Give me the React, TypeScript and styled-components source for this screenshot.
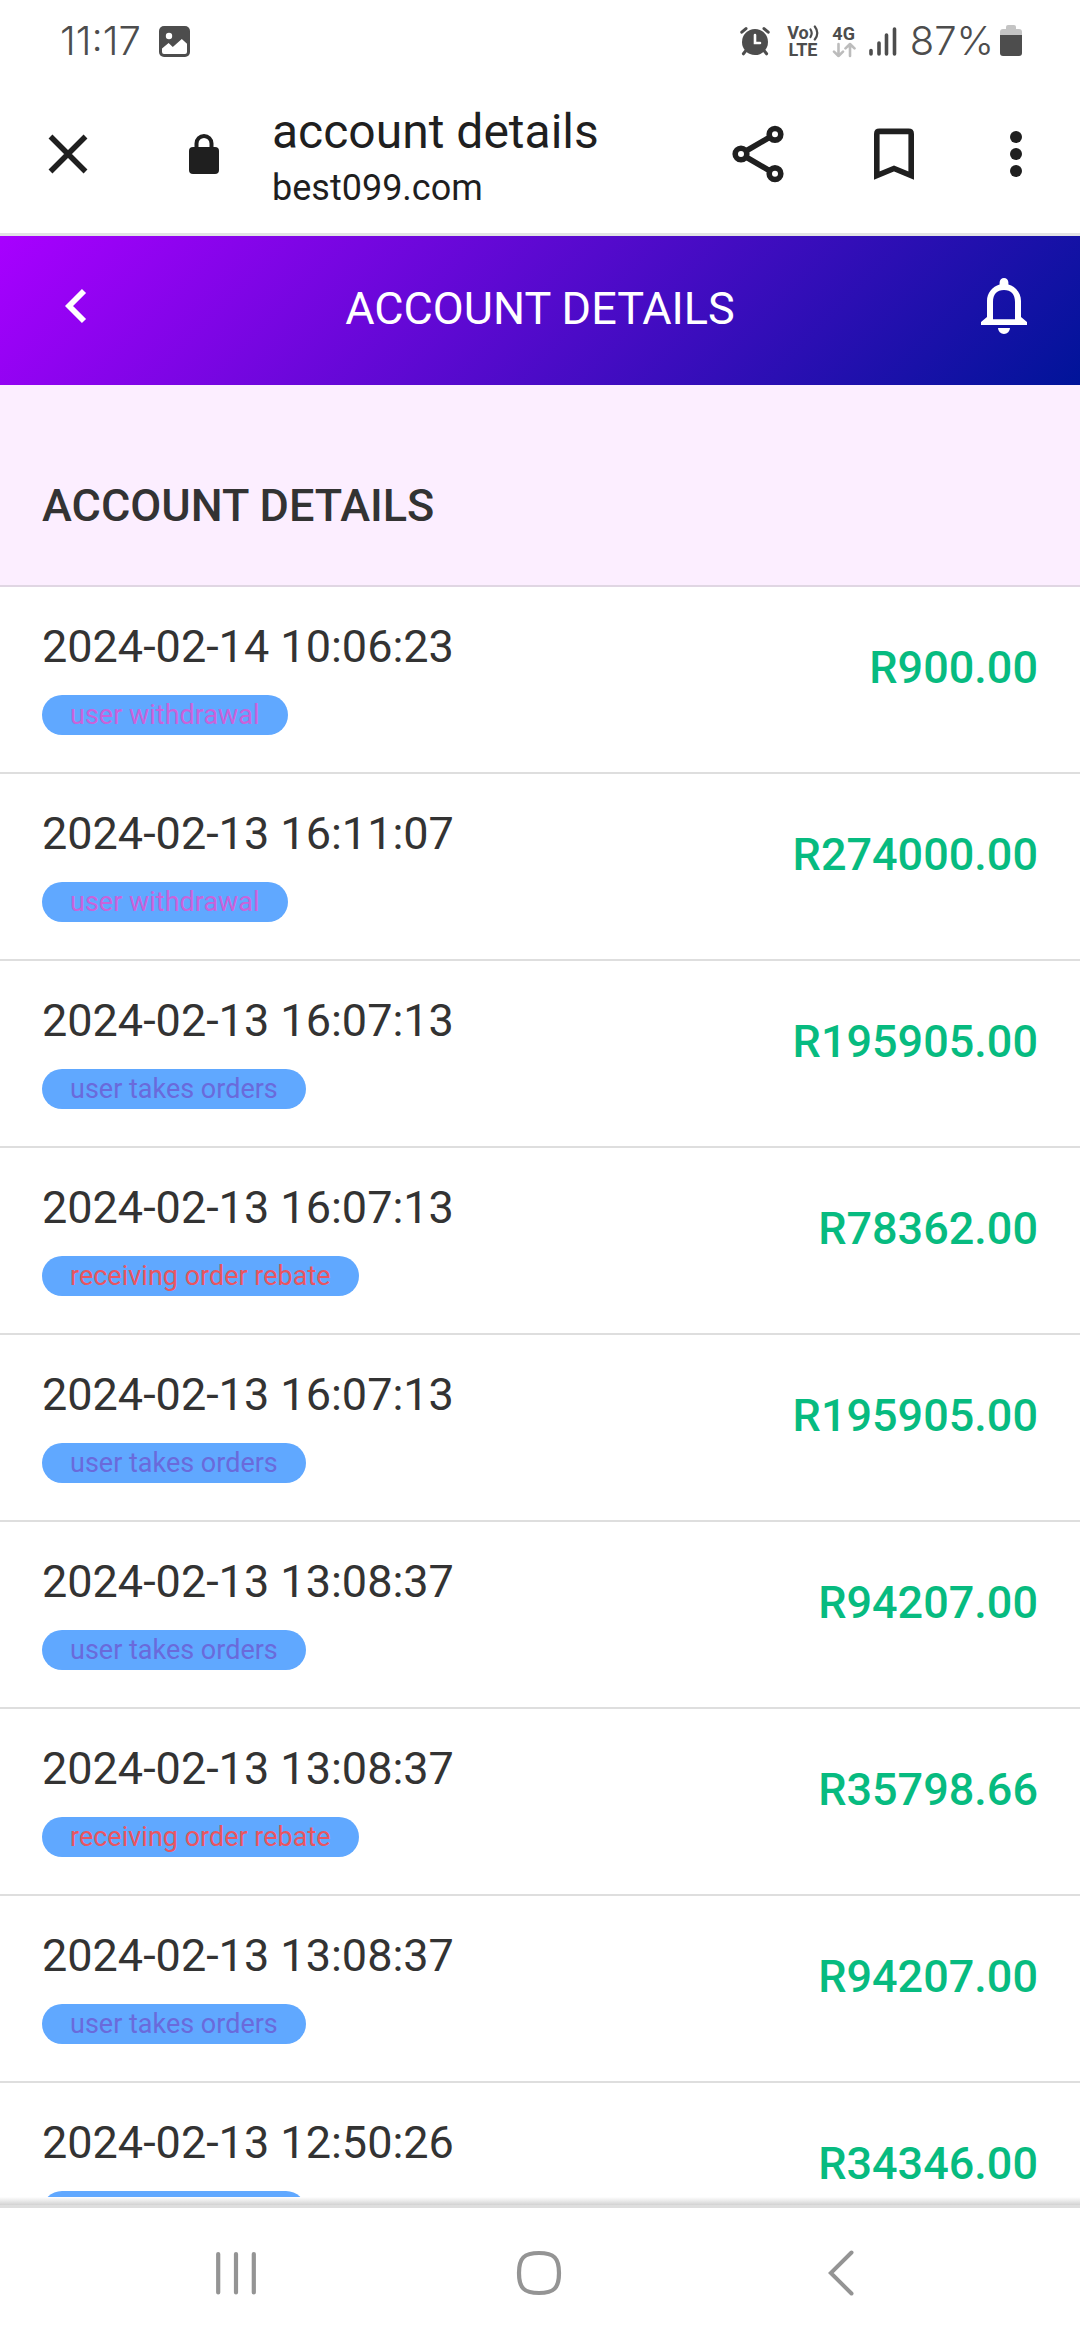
import React from "react";
import styled, { createGlobalStyle } from "styled-components";

const Global = createGlobalStyle`
  *, *::before, *::after { box-sizing: border-box; }
  html, body, #root { height: 100%; }
  body { margin: 0; background: #ffffff; font-family: Roboto, "Liberation Sans", sans-serif; color: #333333; }
  h1, h2, p, ul { margin: 0; padding: 0; font-weight: 400; }
  button { border: 0; padding: 0; background: none; color: inherit; font: inherit; cursor: pointer; }
  svg { display: block; flex: none; }
`;

const Screen = styled.div`
  display: flex;
  flex-direction: column;
  height: 100vh;
  overflow: hidden;
`;

const StatusBar = styled.div`
  flex: none;
  display: flex;
  align-items: center;
  justify-content: space-between;
  height: 82px;
  padding: 0 58px 0 60px;
  color: #4d4d4d;
  font-family: Inter, Roboto, sans-serif;
  font-weight: 300;
  font-size: 40px;
  line-height: 48px;
`;

const StatusGroup = styled.div<{ $gap: number }>`
  display: flex;
  align-items: center;
  gap: ${(p) => p.$gap}px;
`;

const Indicator = styled.span<{ $start?: boolean }>`
  display: flex;
  flex-direction: column;
  align-items: center;
  margin-left: ${(p) => (p.$start ? 4 : 0)}px;
  font-family: Roboto, sans-serif;
  font-size: 18px;
  font-weight: 700;
  line-height: 17px;
`;

const VoLine = styled.span`
  display: flex;
  align-items: center;
`;

const Toolbar = styled.header`
  flex: none;
  display: flex;
  align-items: center;
  height: 154px;
  padding: 0 50px 8px 40px;
  border-bottom: 3px solid #e2e2e4;
  color: #1f1f1f;
`;

const ToolButton = styled.button<{ $narrow?: boolean }>`
  flex: none;
  display: flex;
  align-items: center;
  justify-content: center;
  width: ${(p) => (p.$narrow ? 28 : 56)}px;
  height: 72px;
`;

const PageInfo = styled.div`
  flex: 1;
  min-width: 0;
  margin-left: 40px;
  padding-top: 6px;
`;

const PageTitle = styled.p`
  font-size: 48px;
  line-height: 62px;
  overflow: hidden;
  white-space: nowrap;
  text-overflow: ellipsis;
`;

const PageHost = styled.p`
  font-size: 36px;
  line-height: 50px;
`;

const ToolGroup = styled.div`
  display: flex;
  gap: 80px;
`;

const AppHeader = styled.header`
  flex: none;
  display: grid;
  grid-template-columns: 1fr auto 1fr;
  align-items: center;
  height: 149px;
  padding: 0 48px 4px;
  background: linear-gradient(135deg, #a800ff, #001499);
  color: #ffffff;
`;

const HeaderTitle = styled.h1`
  font-size: 45px;
  line-height: 54px;
`;

const HeaderButton = styled.button<{ $end?: boolean }>`
  display: flex;
  align-items: center;
  justify-content: center;
  width: 56px;
  height: 72px;
  padding-bottom: 6px;
  justify-self: ${(p) => (p.$end ? "end" : "start")};
`;

const SectionHead = styled.div`
  flex: none;
  height: 202px;
  padding: 94px 42px 0;
  border-bottom: 2px solid #e0d6e3;
  background: #fceeff;
`;

const SectionTitle = styled.h2`
  font-size: 45px;
  font-weight: 500;
  line-height: 54px;
`;

const List = styled.ul`
  flex: 1;
  min-height: 0;
  overflow: hidden;
  list-style: none;
`;

const Row = styled.li`
  display: flex;
  align-items: flex-start;
  justify-content: space-between;
  height: 187px;
  padding: 33px 42px 0;
  border-bottom: 2px solid #dedede;
`;

const Stamp = styled.time`
  display: block;
  font-size: 45px;
  line-height: 54px;
`;

const Tag = styled.span<{ $color: string }>`
  display: inline-block;
  margin-top: 21px;
  padding: 0 28px;
  border-radius: 20px;
  background: #60a8ff;
  color: ${(p) => p.$color};
  font-size: 27px;
  line-height: 40px;
  vertical-align: top;
`;

const Amount = styled.span`
  margin-top: 21px;
  color: #07bb80;
  font-size: 45px;
  font-weight: 500;
  line-height: 54px;
`;

const Shade = styled.div`
  flex: none;
  height: 11px;
  border-bottom: 3px solid #dedede;
  background: linear-gradient(#ffffff, #d2d2d2);
`;

const NavBar = styled.nav`
  flex: none;
  display: flex;
  align-items: center;
  justify-content: space-between;
  height: 132px;
  padding: 0 207px 2px 204px;
  color: #949494;
`;

const NavButton = styled.button`
  display: flex;
  align-items: center;
  justify-content: center;
  width: 64px;
  height: 64px;
`;

const PINK = "#cb62da";
const VIOLET = "#6a6adb";
const RED = "#ea5560";

const entries = [
  { time: "2024-02-14 10:06:23", kind: "user withdrawal", color: PINK, amount: "R900.00" },
  { time: "2024-02-13 16:11:07", kind: "user withdrawal", color: PINK, amount: "R274000.00" },
  { time: "2024-02-13 16:07:13", kind: "user takes orders", color: VIOLET, amount: "R195905.00" },
  { time: "2024-02-13 16:07:13", kind: "receiving order rebate", color: RED, amount: "R78362.00" },
  { time: "2024-02-13 16:07:13", kind: "user takes orders", color: VIOLET, amount: "R195905.00" },
  { time: "2024-02-13 13:08:37", kind: "user takes orders", color: VIOLET, amount: "R94207.00" },
  { time: "2024-02-13 13:08:37", kind: "receiving order rebate", color: RED, amount: "R35798.66" },
  { time: "2024-02-13 13:08:37", kind: "user takes orders", color: VIOLET, amount: "R94207.00" },
  { time: "2024-02-13 12:50:26", kind: "user takes orders", color: VIOLET, amount: "R34346.00" },
];

const PictureIcon = () => (
  <svg width="31" height="31" viewBox="0 0 31 31">
    <rect width="31" height="31" rx="5" fill="currentColor" />
    <circle cx="10" cy="10" r="3.2" fill="#fff" />
    <path d="M3 22.5 9.6 17l4.2 4L22.8 13l5.2 4.8V26a2 2 0 0 1-2 2H5a2 2 0 0 1-2-2z" fill="#fff" />
  </svg>
);

const AlarmIcon = () => (
  <svg width="30" height="30" viewBox="0 0 30 30" fill="none" stroke="currentColor" strokeLinecap="round">
    <circle cx="15" cy="16" r="13" fill="currentColor" stroke="none" />
    <path d="M1.8 6.2 6 2.6M28.2 6.2 24 2.6" strokeWidth="3" />
    <path d="m5.6 25-2.2 2.8M24.4 25l2.2 2.8" strokeWidth="3" />
    <path d="M15 9v8h5" stroke="#fff" strokeWidth="2.6" />
  </svg>
);

const WavesIcon = () => (
  <svg width="10" height="16" viewBox="0 0 10 16" fill="none" stroke="currentColor" strokeWidth="2.2" strokeLinecap="round">
    <path d="M1.5 4.5q2.4 3.8 0 7.5M5.8 1.5q5 6.5 0 13" />
  </svg>
);

const DataIcon = () => (
  <svg width="24" height="16" viewBox="0 0 24 16" fill="none" stroke="#bcbcbc" strokeWidth="2.6" strokeLinecap="round" strokeLinejoin="round">
    <path d="M6.5 2v12M2 9.6 6.5 14 11 9.6M18 14V2M13.5 6.4 18 2l4.5 4.4" />
  </svg>
);

const SignalIcon = () => (
  <svg width="28" height="30" viewBox="0 0 28 30" fill="none" stroke="currentColor" strokeWidth="3.6" strokeLinecap="round">
    <path d="M2 24.5V28M10 17v11M17.5 9v19M25.5 3v25" />
  </svg>
);

const BatteryIcon = () => (
  <svg width="22" height="32" viewBox="0 0 22 32">
    <path d="M6 2q0-2 2-2h6q2 0 2 2v2h3q3 0 3 3v3H0V7q0-3 3-3h3z" fill="#c4c4c4" />
    <path d="M0 10h22v18q0 3-3 3H3q-3 0-3-3z" fill="currentColor" />
  </svg>
);

const CloseIcon = () => (
  <svg width="40" height="40" viewBox="0 0 40 40" fill="none" stroke="currentColor" strokeWidth="5.5">
    <path d="m2.5 2.5 35 35M37.5 2.5l-35 35" />
  </svg>
);

const LockIcon = () => (
  <svg width="30" height="40" viewBox="0 0 30 40">
    <rect y="13" width="30" height="27" rx="4" fill="currentColor" />
    <path d="M7.5 15V9.500a7.5 7.5 0 0 1 15 0V15" fill="none" stroke="currentColor" strokeWidth="4" />
  </svg>
);

const ShareIcon = () => (
  <svg width="52" height="58" viewBox="0 0 52 58" fill="none" stroke="currentColor" strokeWidth="5.6">
    <path d="m14 26 24-14M14 32l24 14" />
    <circle cx="9" cy="29" r="5.8" fill="#fff" />
    <circle cx="43" cy="9.3" r="5.8" fill="#fff" />
    <circle cx="43" cy="48.7" r="5.8" fill="#fff" />
  </svg>
);

const BookmarkIcon = () => (
  <svg width="40" height="52" viewBox="0 0 40 52" fill="none" stroke="currentColor" strokeWidth="5.6">
    <path d="M2.8 47.5V6q0-2.6 2.6-2.6h29.200q2.6 0 2.6 2.6v41.5L20 40.5z" />
  </svg>
);

const DotsIcon = () => (
  <svg width="12" height="48" viewBox="0 0 12 48" fill="currentColor">
    <circle cx="6" cy="7" r="6" />
    <circle cx="6" cy="24" r="6" />
    <circle cx="6" cy="41" r="6" />
  </svg>
);

const ChevronIcon = () => (
  <svg width="22" height="36" viewBox="0 0 22 36" fill="none" stroke="currentColor" strokeWidth="5.8">
    <path d="M19 3 4 18l15 15" />
  </svg>
);

const BellIcon = () => (
  <svg width="46" height="56" viewBox="0 0 46 56">
    <path
      fill="currentColor"
      fillRule="evenodd"
      d="M23 0a4.400 4.400 0 0 1 4.400 4.400v2.200C34.500 8.500 40 15 40 23v16l6 5v3H0v-3l6-5V23C6 15 11.500 8.500 18.600 6.600V4.400A4.400 4.400 0 0 1 23 0zM12 41.300h22V24C34 16 30 12 23 12S12 16 12 24zM17 50h12a6 6 0 0 1-12 0z"
    />
  </svg>
);

const RecentsIcon = () => (
  <svg width="40" height="46" viewBox="0 0 40 46" stroke="currentColor" strokeWidth="4.2" strokeLinecap="round">
    <path d="M2.2 4v38.500M20 4v38.500M37.800 4v38.500" />
  </svg>
);

const HomeIcon = () => (
  <svg width="46" height="46" viewBox="0 0 46 46" fill="none" stroke="currentColor" strokeWidth="4.2">
    <path d="M23 3C38 3 43 8 43 23s-5 20-20 20S3 38 3 23 8 3 23 3z" />
  </svg>
);

const BackIcon = () => (
  <svg width="26" height="46" viewBox="0 0 26 46" fill="none" stroke="currentColor" strokeWidth="4" strokeLinecap="round">
    <path d="M23.500 2.500 2.800 23l20.700 20.500" />
  </svg>
);

export default function App() {
  return (
    <Screen>
      <Global />
      <StatusBar>
        <StatusGroup $gap={18}>
          <span>11:17</span>
          <PictureIcon />
        </StatusGroup>
        <StatusGroup $gap={13}>
          <AlarmIcon />
          <Indicator $start>
            <VoLine>
              Vo
              <WavesIcon />
            </VoLine>
            <span>LTE</span>
          </Indicator>
          <Indicator>
            <span>4G</span>
            <DataIcon />
          </Indicator>
          <SignalIcon />
          <StatusGroup $gap={6}>
            <span>87%</span>
            <BatteryIcon />
          </StatusGroup>
        </StatusGroup>
      </StatusBar>

      <Toolbar>
        <ToolGroup>
          <ToolButton aria-label="Close">
            <CloseIcon />
          </ToolButton>
          <ToolButton aria-label="Site information">
            <LockIcon />
          </ToolButton>
        </ToolGroup>
        <PageInfo>
          <PageTitle>account details</PageTitle>
          <PageHost>best099.com</PageHost>
        </PageInfo>
        <ToolGroup>
          <ToolButton aria-label="Share">
            <ShareIcon />
          </ToolButton>
          <ToolButton aria-label="Bookmark">
            <BookmarkIcon />
          </ToolButton>
          <ToolButton aria-label="More options" $narrow>
            <DotsIcon />
          </ToolButton>
        </ToolGroup>
      </Toolbar>

      <AppHeader>
        <HeaderButton aria-label="Back">
          <ChevronIcon />
        </HeaderButton>
        <HeaderTitle>ACCOUNT DETAILS</HeaderTitle>
        <HeaderButton aria-label="Notifications" $end>
          <BellIcon />
        </HeaderButton>
      </AppHeader>

      <SectionHead>
        <SectionTitle>ACCOUNT DETAILS</SectionTitle>
      </SectionHead>

      <List>
        {entries.map((e, i) => (
          <Row key={i}>
            <div>
              <Stamp>{e.time}</Stamp>
              <Tag $color={e.color}>{e.kind}</Tag>
            </div>
            <Amount>{e.amount}</Amount>
          </Row>
        ))}
      </List>

      <Shade />
      <NavBar>
        <NavButton aria-label="Recent apps">
          <RecentsIcon />
        </NavButton>
        <NavButton aria-label="Home">
          <HomeIcon />
        </NavButton>
        <NavButton aria-label="Go back">
          <BackIcon />
        </NavButton>
      </NavBar>
    </Screen>
  );
}
